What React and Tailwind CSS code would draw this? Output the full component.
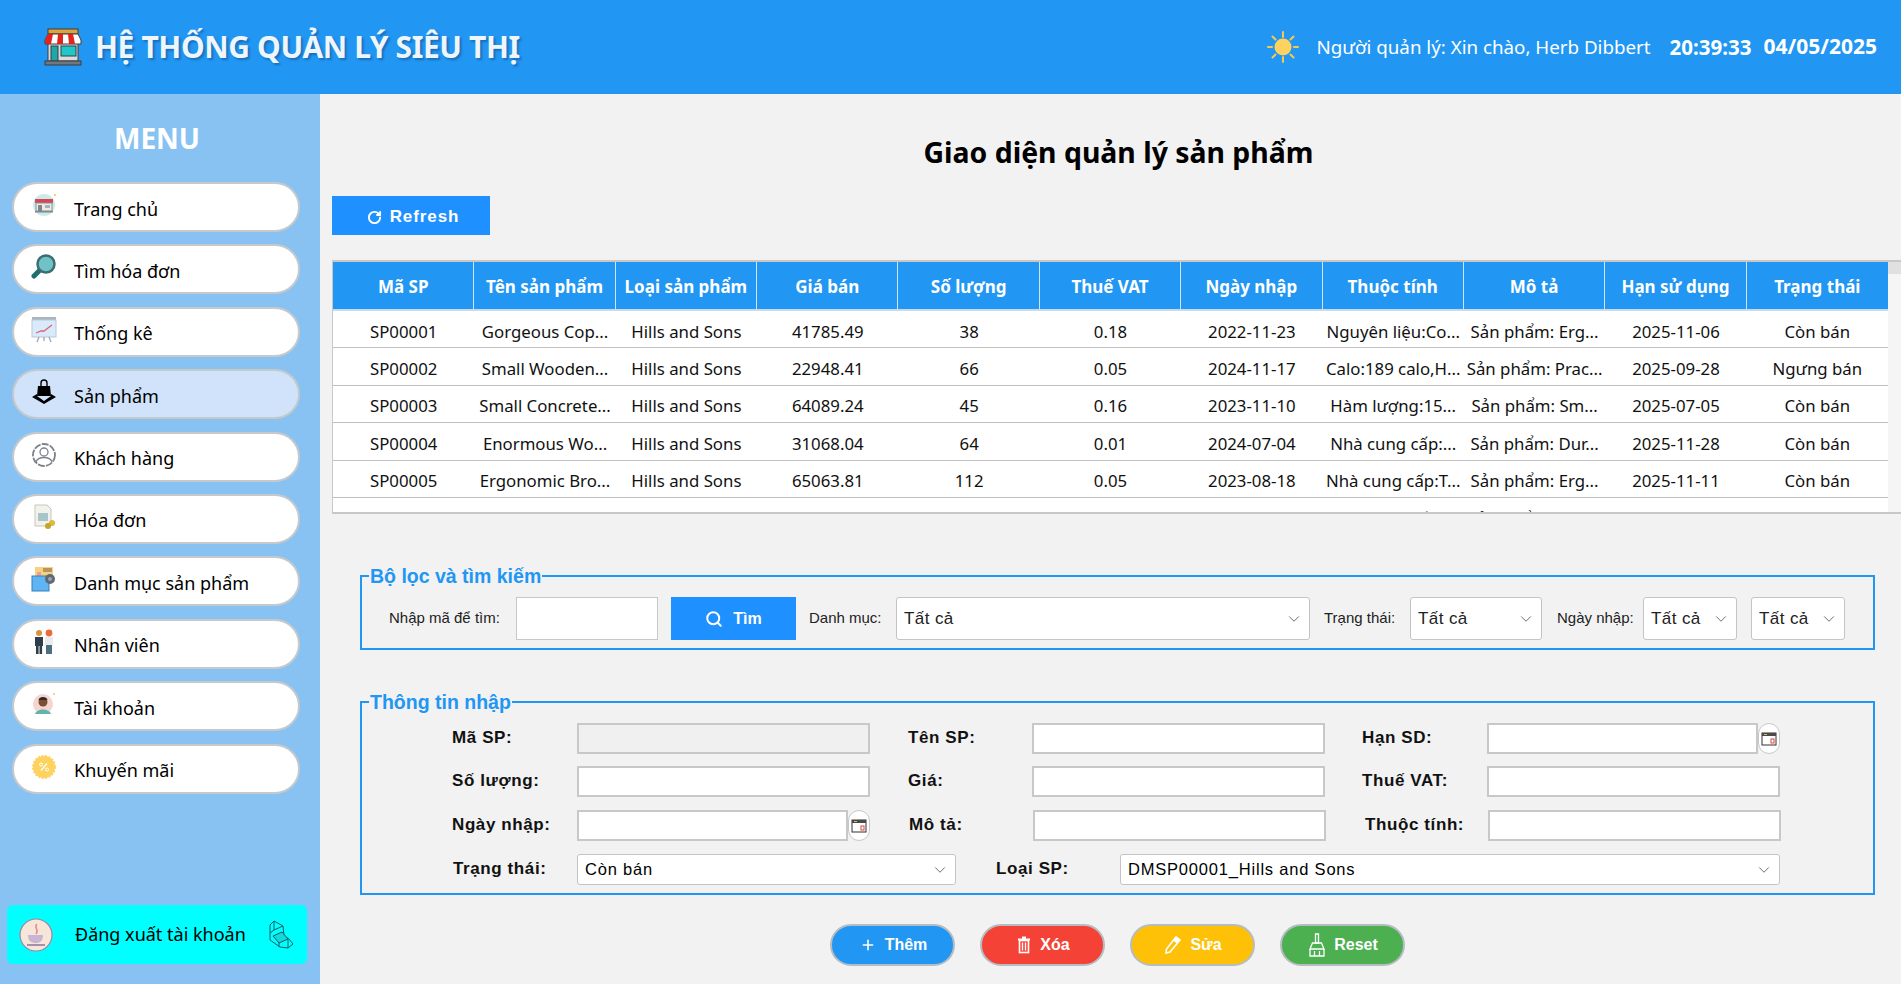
import { ChevronDown, Plus, RotateCw, Search } from "lucide-react";

const HomeIcon = () => (
  <svg width="26" height="26" viewBox="0 0 26 26">
    <circle cx="13" cy="13" r="11" fill="#c9ece8" />
    <rect x="4" y="7" width="18" height="4" fill="#d8455a" />
    <rect x="5" y="11" width="16" height="8" fill="#f3e9dc" stroke="#8a8f99" />
    <rect x="7" y="13" width="4" height="6" fill="#7d8794" />
    <rect x="14" y="13" width="5" height="3" fill="#9fb4c4" />
    <rect x="4" y="19" width="18" height="1.5" fill="#7d8794" />
    <circle cx="24" cy="3" r="1" fill="#f5c842" />
  </svg>
);

const FindIcon = () => (
  <svg width="26" height="26" viewBox="0 0 26 26">
    <path d="M9 16 L3 22" stroke="#1f6f6d" strokeWidth="5" strokeLinecap="round" />
    <circle cx="15" cy="10" r="8.5" fill="#6fc3c6" stroke="#3d6d70" strokeWidth="2.5" />
  </svg>
);

const ChartIcon = () => (
  <svg width="26" height="28" viewBox="0 0 26 28">
    <rect x="1" y="1" width="24" height="3" fill="#a9b4bd" />
    <rect x="1" y="4" width="24" height="17" fill="#d9eafa" stroke="#b9c9d6" />
    <path d="M5 17 L10 15 L13 15 L17 12 L21 9" stroke="#d9647a" strokeWidth="1.3" fill="none" />
    <path d="M8 21 L6 26 M18 21 L20 26 M13 21 V25" stroke="#a0a7ad" strokeWidth="1.3" />
  </svg>
);

const BagIcon = () => (
  <svg width="26" height="26" viewBox="0 0 26 26">
    <path d="M7 7 H19 L20 17 H6 Z" fill="#000" />
    <path d="M10 7 V4 a3 3 0 0 1 6 0 V7" stroke="#000" strokeWidth="1.4" fill="none" />
    <path d="M6 15 L1 18 L13 25 L25 18 L20 15 L20 17 L13 22 L6 17 Z" fill="#000" />
  </svg>
);

const UserIcon = () => (
  <svg width="26" height="26" viewBox="0 0 26 26" fill="none">
    <circle cx="13" cy="13" r="11" stroke="#7c818a" strokeWidth="1.8" strokeDasharray="7 1.2" />
    <circle cx="13" cy="10" r="4" stroke="#7c818a" strokeWidth="1.3" />
    <path d="M5 20 C7 14 19 14 21 20" stroke="#7c818a" strokeWidth="1.3" />
  </svg>
);

const InvoiceIcon = () => (
  <svg width="26" height="26" viewBox="0 0 26 26">
    <path d="M4 1 H16 L20 5 V22 H4 Z" fill="#f2f2ea" stroke="#c5c7bd" />
    <rect x="7" y="9" width="10" height="8" fill="#a8c5c9" />
    <circle cx="21" cy="19" r="3" fill="#e0b93c" />
    <circle cx="17" cy="22" r="3" fill="#c7a32f" />
  </svg>
);

const CategoryIcon = () => (
  <svg width="26" height="26" viewBox="0 0 26 26">
    <rect x="4" y="1" width="18" height="14" fill="#f6d27f" />
    <rect x="6" y="6" width="4" height="6" fill="#ef9c9c" />
    <rect x="12" y="2" width="9" height="4" fill="#b89460" />
    <rect x="1" y="10" width="17" height="15" fill="#5fb4f3" stroke="#3c7fb5" />
    <circle cx="19" cy="13" r="5" fill="#5f6873" />
    <circle cx="19" cy="13" r="2" fill="#9aa4ad" />
  </svg>
);

const StaffIcon = () => (
  <svg width="26" height="26" viewBox="0 0 26 26">
    <circle cx="8" cy="4" r="3" fill="#d8933f" />
    <rect x="4" y="8" width="8" height="9" fill="#2f3f4a" />
    <rect x="5" y="17" width="2.6" height="8" fill="#2f3f4a" />
    <rect x="8.5" y="17" width="2.6" height="8" fill="#2f3f4a" />
    <circle cx="18" cy="4" r="3.4" fill="#ee6a3a" />
    <rect x="14" y="8" width="8" height="8" fill="#e8ecef" />
    <rect x="15" y="16" width="6" height="9" fill="#4d6f80" />
  </svg>
);

const AvatarIcon = () => (
  <svg width="26" height="26" viewBox="0 0 26 26">
    <circle cx="12" cy="13" r="10" fill="#f6d5d0" />
    <path d="M4 23 C6 17 18 17 20 23 Z" fill="#62b3ad" />
    <circle cx="12" cy="11" r="4.5" fill="#7a5030" />
    <path d="M7.5 9 C8 5 16 5 16.5 9 Z" fill="#2f2a28" />
    <circle cx="23" cy="3" r="1" fill="#f5c842" />
  </svg>
);

const PromoIcon = () => (
  <svg width="26" height="26" viewBox="0 0 26 26">
    <circle cx="13" cy="13" r="11" fill="#fdd25f" stroke="#fdd25f" strokeWidth="2" strokeDasharray="2 1.5" />
    <circle cx="13" cy="13" r="10" fill="#fdd25f" />
    <path d="M10 16.5 L16 9.5" stroke="#fff" strokeWidth="1.2" />
    <circle cx="10" cy="10.5" r="1.5" fill="none" stroke="#fff" />
    <circle cx="16" cy="15.5" r="1.5" fill="none" stroke="#fff" />
  </svg>
);

const JavaIcon = () => (
  <svg width="34" height="34" viewBox="0 0 34 34">
    <circle cx="17" cy="17" r="16" fill="#f7e6d8" stroke="#9c84a8" strokeWidth="1.2" />
    <path d="M18 6 C14 10 21 11 17 16" stroke="#e58a9b" strokeWidth="1.5" fill="none" />
    <path d="M9 17 H24 C24 23 21 25 17 25 C12 25 9 23 9 17 Z" fill="#c8b5d4" />
    <path d="M8 27 H26" stroke="#8f7aa3" strokeWidth="1.6" />
  </svg>
);

const LogoutIcon = () => (
  <svg width="26" height="30" viewBox="0 0 26 30" fill="none" stroke="#0b5f66" strokeWidth="1">
    <path d="M2 5 L6 1 L15 6 L16 16 L21 19 L25 24 L20 28 L12 27 L2 20 Z" />
    <path d="M6 1 V10 L2 13 M15 6 L6 10" />
    <path d="M5 16 L14 12 L20 19 L11 23 Z" fill="#12d8d8" />
    <path d="M11 23 V27 M20 19 L20 28" />
  </svg>
);

const SunIcon = () => (
  <svg width="32" height="32" viewBox="0 0 32 32">
    <path d="M16 1 V6 M16 26 V31 M1 16 H5 M27 16 H31 M5.5 5.5 L8.5 8.5 M23.5 23.5 L26.5 26.5 M26.5 5.5 L23.5 8.5 M8.5 23.5 L5.5 26.5" stroke="#f9c851" strokeWidth="2" strokeLinecap="round" />
    <circle cx="16" cy="16" r="8.5" fill="#fdd25f" />
  </svg>
);

const StoreIcon = () => (
  <svg width="38" height="38" viewBox="0 0 38 38">
    <rect x="4" y="1" width="30" height="5" fill="#e0a23b" stroke="#3d3d3d" />
    <rect x="4" y="14" width="30" height="19" fill="#d5dde0" stroke="#3d3d3d" />
    <rect x="7" y="18" width="7" height="15" fill="#1fa6a8" stroke="#3d3d3d" />
    <rect x="17" y="18" width="15" height="10" fill="#1fc8c8" stroke="#3d3d3d" />
    <rect x="1" y="33" width="36" height="4" fill="#6f7780" stroke="#3d3d3d" />
    <path d="M4 6 H34 L37 12 V16 H1 V12 Z" fill="#fff" stroke="#3d3d3d" />
    <path d="M4 6 H9 L7 16 H1 V12 Z M14 6 H19 V16 H13 Z M24 6 H29 L31 16 H25 Z" fill="#e0241f" />
  </svg>
);

const CalendarIcon = () => (
  <svg width="16" height="16" viewBox="0 0 16 16">
    <rect x="1" y="2" width="14" height="12" fill="#fff" stroke="#333" />
    <rect x="1" y="2" width="14" height="3" fill="#4a4a4a" />
    <rect x="3" y="3" width="3" height="1" fill="#e8b84a" />
    <rect x="10" y="8" width="3" height="4" fill="none" stroke="#e0453a" />
  </svg>
);

const TrashIcon = () => (
  <svg width="14" height="18" viewBox="0 0 14 18" fill="none" stroke="#fff">
    <path d="M5 1.5 H9 M1 3.5 H13" strokeWidth="1.8" />
    <rect x="2.5" y="4.5" width="9" height="12" strokeWidth="1.6" />
    <path d="M5.5 6.5 V14.5 M8.5 6.5 V14.5" strokeWidth="1.4" />
  </svg>
);

const PenIcon = () => (
  <svg width="16" height="18" viewBox="0 0 16 18">
    <path d="M11 1 L15 4 L5 16 L1 17 L1.5 13 Z" fill="none" stroke="#fff" strokeWidth="1.6" />
    <path d="M11 1 L15 4 L12 7.5 L8 4.5 Z" fill="#fff" />
  </svg>
);

const BroomIcon = () => (
  <svg width="16" height="24" viewBox="0 0 16 24" fill="none" stroke="#fff" strokeWidth="1.3">
    <path d="M6.5 1 H9.5 V10 H6.5 Z" />
    <path d="M3.5 10 H12.5 L15 16 H1 Z" />
    <path d="M1 16 V23 H15 V16 M5.5 18 V23 M10.5 18 V23" />
  </svg>
);

const menuItems = [
  { label: "Trang chủ", icon: <HomeIcon /> },
  { label: "Tìm hóa đơn", icon: <FindIcon /> },
  { label: "Thống kê", icon: <ChartIcon /> },
  { label: "Sản phẩm", icon: <BagIcon />, active: true },
  { label: "Khách hàng", icon: <UserIcon /> },
  { label: "Hóa đơn", icon: <InvoiceIcon /> },
  { label: "Danh mục sản phẩm", icon: <CategoryIcon /> },
  { label: "Nhân viên", icon: <StaffIcon /> },
  { label: "Tài khoản", icon: <AvatarIcon /> },
  { label: "Khuyến mãi", icon: <PromoIcon /> },
];

const columns = [
  "Mã SP",
  "Tên sản phẩm",
  "Loại sản phẩm",
  "Giá bán",
  "Số lượng",
  "Thuế VAT",
  "Ngày nhập",
  "Thuộc tính",
  "Mô tả",
  "Hạn sử dụng",
  "Trạng thái",
];

const rows = [
  ["SP00001", "Gorgeous Cop...", "Hills and Sons", "41785.49", "38", "0.18", "2022-11-23", "Nguyên liệu:Co...", "Sản phẩm: Erg...", "2025-11-06", "Còn bán"],
  ["SP00002", "Small Wooden...", "Hills and Sons", "22948.41", "66", "0.05", "2024-11-17", "Calo:189 calo,H...", "Sản phẩm: Prac...", "2025-09-28", "Ngưng bán"],
  ["SP00003", "Small Concrete...", "Hills and Sons", "64089.24", "45", "0.16", "2023-11-10", "Hàm lượng:15...", "Sản phẩm: Sm...", "2025-07-05", "Còn bán"],
  ["SP00004", "Enormous Wo...", "Hills and Sons", "31068.04", "64", "0.01", "2024-07-04", "Nhà cung cấp:...", "Sản phẩm: Dur...", "2025-11-28", "Còn bán"],
  ["SP00005", "Ergonomic Bro...", "Hills and Sons", "65063.81", "112", "0.05", "2023-08-18", "Nhà cung cấp:T...", "Sản phẩm: Erg...", "2025-11-11", "Còn bán"],
  ["SP00006", "Heavy Duty St...", "Hills and Sons", "48120.75", "90", "0.12", "2024-02-09", "Nhà cung cấp:...", "Sản phẩm: Hea...", "2025-10-14", "Còn bán"],
];

const SelectBox = ({ value, className }) => (
  <div className={`flex items-center justify-between bg-white border border-[#c4c4c4] rounded-[3px] pl-[7px] pr-[6px] ${className}`}>
    <span className="truncate">{value}</span>
    <ChevronDown className="w-[18px] h-[18px] text-[#5f5f5f] shrink-0" strokeWidth={1.2} />
  </div>
);

const TextBox = ({ className = "", disabled }) => (
  <input
    disabled={disabled}
    className={`border-2 border-[#c8c8c8] ${disabled ? "bg-[#f0f0f0]" : "bg-white"} ${className}`}
  />
);

const DateButton = () => (
  <div className="w-[22px] h-full bg-white border border-[#c8c8c8] rounded-full flex items-center justify-center shrink-0">
    <CalendarIcon />
  </div>
);

const FieldLabel = ({ children, className }) => (
  <label className={`font-['Liberation_Sans',sans-serif] font-bold text-[17px] tracking-[0.6px] text-[#111] pb-[2px] shrink-0 ${className}`}>
    {children}
  </label>
);

const GroupBox = ({ title, className, children }) => (
  <fieldset className={`border-2 border-[#2196f3] w-[1515px] shrink-0 ${className}`}>
    <legend className="ml-[7px] px-px font-['Liberation_Sans',sans-serif] font-bold text-[19.5px] leading-[18px] text-[#2196f3]">
      {title}
    </legend>
    {children}
  </fieldset>
);

const ActionButton = ({ color, icon, label }) => (
  <button className={`w-[125px] h-[42px] pb-px pl-[2px] rounded-full border-2 border-[#b5bcc2] ${color} text-white flex items-center justify-center gap-[9px] font-['Liberation_Sans',sans-serif] font-bold text-[16px]`}>
    {icon}
    {label}
  </button>
);

const App = () => {
  return (
    <div className="w-full h-screen overflow-hidden flex flex-col bg-[#f2f2f2] font-['Noto_Sans',sans-serif] text-black">
      {/* Header */}
      <header className="h-[94px] shrink-0 bg-[#2196f3] flex items-center text-white pl-[44px] pr-[24px]">
        <StoreIcon />
        <h1 className="ml-[13px] pb-[2px] text-[30px] font-bold tracking-[-0.38px] [text-shadow:2px_2px_2px_rgba(20,80,140,0.55)] text-[#eef6fc]">
          HỆ THỐNG QUẢN LÝ SIÊU THỊ
        </h1>
        <div className="ml-auto flex items-center">
          <SunIcon />
          <span className="ml-[18px] text-[18.75px]">Người quản lý: Xin chào, Herb Dibbert</span>
          <span className="ml-[19px] text-[20.5px] font-bold">20:39:33</span>
          <span className="ml-[12px] text-[21px] font-bold">04/05/2025</span>
        </div>
      </header>

      <div className="flex-1 flex min-h-0">
        {/* Sidebar */}
        <aside className="w-[320px] shrink-0 bg-[#88c2f3] flex flex-col pt-[25px]">
          <div className="text-center text-white font-bold text-[28px] leading-[38px] mr-[6px]">MENU</div>
          <nav className="mt-[25px] ml-[12px] w-[288px] flex flex-col gap-[12.4px]">
            {menuItems.map((item) => (
              <div
                key={item.label}
                className={`h-[50px] rounded-full border-2 border-[#c6c9cc] flex items-center pl-[17px] ${item.active ? "bg-[#d0e3fa]" : "bg-white"}`}
              >
                <span className="w-[26px] h-[28px] flex items-center justify-center -mt-[4px]">{item.icon}</span>
                <span className="ml-[17px] pt-[4px] text-[18px]">{item.label}</span>
              </div>
            ))}
          </nav>
          <div className="mt-auto mb-[20px] ml-[7px] w-[300px] h-[59px] bg-[#00ffff] rounded-[6px] flex items-center pl-[12px]">
            <JavaIcon />
            <span className="ml-[22px] text-[18px]">Đăng xuất tài khoản</span>
            <span className="ml-auto mr-[13px]"><LogoutIcon /></span>
          </div>
        </aside>

        {/* Main content */}
        <main className="flex-1 min-w-0 flex flex-col pl-[12px]">
          <h2 className="text-center text-[28.4px] font-bold leading-[40px] mt-[38px] pl-[4px]">Giao diện quản lý sản phẩm</h2>
          <button className="mt-[24px] w-[158px] h-[39px] pt-[3px] pl-[4px] bg-[#1e90ff] text-white flex items-center justify-center gap-[8px] font-['Liberation_Sans',sans-serif] font-bold text-[17px] tracking-[0.9px]">
            <RotateCw className="w-[15px] h-[15px]" strokeWidth={3} />
            Refresh
          </button>

          {/* Table */}
          <div className="mt-[25px] h-[254px] border-y-2 border-l border-[#c8c8c8] overflow-hidden flex bg-white">
            <div className="flex-1 min-w-0">
              <div className="grid grid-cols-11 h-[49px] bg-[#2196f3] text-white font-bold text-[17px] border-b-2 border-[#c5dcee]">
                {columns.map((col, i) => (
                  <div key={col} className={`flex items-center justify-center pt-[2px] whitespace-nowrap ${i < 10 ? "border-r border-[#cfe4f5]" : ""}`}>
                    {col}
                  </div>
                ))}
              </div>
              {rows.map((row) => (
                <div key={row[0]} className="grid grid-cols-11 h-[37.4px] border-b border-[#c0c0c0] text-[16.8px] text-[#111]">
                  {row.map((cell, i) => (
                    <div key={i} className="flex items-center justify-center pt-[4px] whitespace-nowrap overflow-hidden">
                      {cell}
                    </div>
                  ))}
                </div>
              ))}
            </div>
            <div className="w-[13px] shrink-0 bg-[#f5f5f5]">
              <div className="h-[12px] bg-[#e0e0e0]" />
            </div>
          </div>

          {/* Filter */}
          <GroupBox title="Bộ lọc và tìm kiếm" className="mt-[53px] ml-[28px] h-[83px]">
            <div className="flex items-center h-[43px] mt-[12px] px-[27px] font-['Liberation_Sans',sans-serif] text-[15px] text-[#222]">
              <span className="w-[127px] shrink-0">Nhập mã để tìm:</span>
              <TextBox className="w-[142px] h-[43px] !border" />
              <button className="ml-[13px] w-[125px] h-[43px] bg-[#1e90ff] text-white flex items-center justify-center gap-[10px] font-bold text-[16px]">
                <Search className="w-[18px] h-[18px]" strokeWidth={2.6} />
                Tìm
              </button>
              <span className="ml-[13px] w-[87px] shrink-0">Danh mục:</span>
              <SelectBox value="Tất cả" className="w-[414px] h-[43px] text-[17px] tracking-[0.4px]" />
              <span className="ml-[14px] w-[86px] shrink-0">Trạng thái:</span>
              <SelectBox value="Tất cả" className="w-[132px] h-[43px] text-[17px] tracking-[0.4px]" />
              <span className="ml-[15px] w-[86px] shrink-0">Ngày nhập:</span>
              <SelectBox value="Tất cả" className="w-[94px] h-[43px] text-[17px] tracking-[0.4px]" />
              <SelectBox value="Tất cả" className="ml-[14px] w-[94px] h-[43px] text-[17px] tracking-[0.4px]" />
            </div>
          </GroupBox>

          {/* Input form */}
          <GroupBox title="Thông tin nhập" className="mt-[43px] ml-[28px] h-[202px]">
            <div className="flex flex-col mt-[12px] pl-[90px]">
              <div className="flex items-center h-[31px]">
                <FieldLabel className="w-[125px]">Mã SP:</FieldLabel>
                <TextBox disabled className="w-[293px] h-full" />
                <FieldLabel className="ml-[38px] w-[124px]">Tên SP:</FieldLabel>
                <TextBox className="w-[293px] h-full" />
                <FieldLabel className="ml-[37px] w-[125px]">Hạn SD:</FieldLabel>
                <TextBox className="w-[271px] h-full" />
                <DateButton />
              </div>
              <div className="flex items-center h-[31px] mt-[12px]">
                <FieldLabel className="w-[125px]">Số lượng:</FieldLabel>
                <TextBox className="w-[293px] h-full" />
                <FieldLabel className="ml-[38px] w-[124px]">Giá:</FieldLabel>
                <TextBox className="w-[293px] h-full" />
                <FieldLabel className="ml-[37px] w-[125px]">Thuế VAT:</FieldLabel>
                <TextBox className="w-[293px] h-full" />
              </div>
              <div className="flex items-center h-[31px] mt-[13px]">
                <FieldLabel className="w-[125px]">Ngày nhập:</FieldLabel>
                <TextBox className="w-[271px] h-full" />
                <DateButton />
                <FieldLabel className="ml-[38px] w-[125px] pl-px">Mô tả:</FieldLabel>
                <TextBox className="w-[293px] h-full" />
                <FieldLabel className="ml-[37px] w-[125px] pl-[2px]">Thuộc tính:</FieldLabel>
                <TextBox className="w-[293px] h-full" />
              </div>
              <div className="flex items-center h-[31px] mt-[13px]">
                <FieldLabel className="w-[125px] pl-px">Trạng thái:</FieldLabel>
                <SelectBox value="Còn bán" className="w-[379px] h-full font-['Liberation_Sans',sans-serif] text-[16.5px] tracking-[0.8px]" />
                <FieldLabel className="ml-[40px] w-[124px]">Loại SP:</FieldLabel>
                <SelectBox value="DMSP00001_Hills and Sons" className="w-[660px] h-full font-['Liberation_Sans',sans-serif] text-[16.5px] tracking-[0.8px]" />
              </div>
            </div>
          </GroupBox>

          {/* Actions */}
          <div className="mt-[29px] ml-[498px] flex gap-[25px]">
            <ActionButton color="bg-[#2196f3]" icon={<Plus className="w-[16px] h-[16px]" strokeWidth={2.4} />} label="Thêm" />
            <ActionButton color="bg-[#f44336]" icon={<TrashIcon />} label="Xóa" />
            <ActionButton color="bg-[#ffc107]" icon={<PenIcon />} label="Sửa" />
            <ActionButton color="bg-[#4caf50]" icon={<BroomIcon />} label="Reset" />
          </div>
        </main>
      </div>
    </div>
  );
};

export default App;
